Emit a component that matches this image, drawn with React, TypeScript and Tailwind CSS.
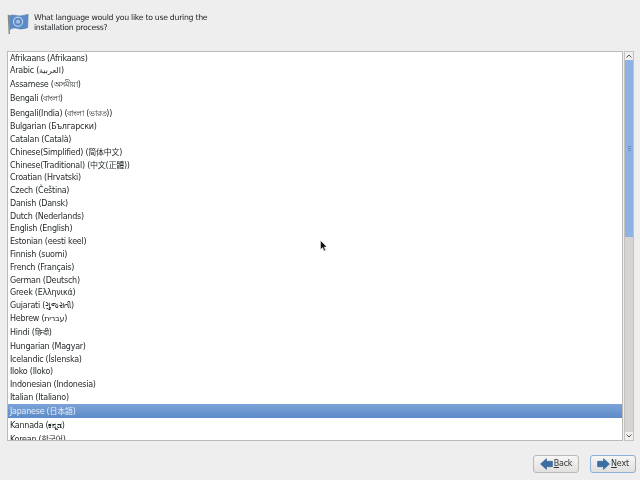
const languages: [string, string][] = [
  ['Afrikaans (Afrikaans)', 'h-[12px]'],
  ['Arabic (العربية)', 'h-[13px]'],
  ['Assamese (অসমীয়া)', 'h-[14px]'],
  ['Bengali (বাংলা)', 'h-[15px]'],
  ['Bengali(India) (বাংলা (ভারত))', 'h-[14px]'],
  ['Bulgarian (Български)', 'h-[13px]'],
  ['Catalan (Català)', 'h-[13px]'],
  ['Chinese(Simplified) (简体中文)', 'h-[13px]'],
  ['Chinese(Traditional) (中文(正體))', 'h-[12px]'],
  ['Croatian (Hrvatski)', 'h-[13px]'],
  ['Czech (Čeština)', 'h-[13px]'],
  ['Danish (Dansk)', 'h-[13px]'],
  ['Dutch (Nederlands)', 'h-[12px]'],
  ['English (English)', 'h-[13px]'],
  ['Estonian (eesti keel)', 'h-[13px]'],
  ['Finnish (suomi)', 'h-[13px]'],
  ['French (Français)', 'h-[13px]'],
  ['German (Deutsch)', 'h-[12px]'],
  ['Greek (Ελληνικά)', 'h-[13px]'],
  ['Gujarati (ગુજરાતી)', 'h-[13px]'],
  ['Hebrew (עברית)', 'h-[13px]'],
  ['Hindi (हिन्दी)', 'h-[15px]'],
  ['Hungarian (Magyar)', 'h-[13px]'],
  ['Icelandic (Íslenska)', 'h-[12px]'],
  ['Iloko (Iloko)', 'h-[13px]'],
  ['Indonesian (Indonesia)', 'h-[13px]'],
  ['Italian (Italiano)', 'h-[13px]'],
  ['Japanese (日本語)', 'h-[14px]'],
  ['Kannada (ಕನ್ನಡ)', 'h-[14px]'],
  ['Korean (한국어)', 'h-[14px]'],
];

function FlagIcon() {
  return (
    <svg width="23" height="22" viewBox="0 0 24 24" className="mt-[1px] shrink-0">
      <path d="M1 2 L2 23" stroke="#8a8a84" strokeWidth="1.6" fill="none" />
      <path d="M2 3 C7 1 11 4 15 3 C18 2.5 20 2 22.5 1.5 L22 16 C18 17 15 18 11 17 C8 16 5 16.5 2.8 18 Z" fill="#5b8cc8" stroke="#4a74a8" strokeWidth="0.6" />
      <circle cx="11.5" cy="9.5" r="5" fill="none" stroke="#c6d6ea" strokeWidth="1.2" />
      <circle cx="11.5" cy="9.5" r="2.2" fill="#a9c2e0" />
    </svg>
  );
}

function ArrowIcon({ flip }: { flip?: boolean }) {
  return (
    <svg width="13" height="12" viewBox="0 0 12 11" className={flip ? 'rotate-180' : ''}>
      <path d="M0.5 3 H6 V0.5 L11.5 5.5 L6 10.5 V8 H0.5 Z" fill="#3a6ea5" stroke="#2f5d8f" strokeWidth="0.5" />
    </svg>
  );
}

function WizardButton({ label, accel, flip, focused }: { label: string; accel: string; flip?: boolean; focused?: boolean }) {
  return (
    <button className={`flex h-[18px] w-[46px] items-center justify-center gap-[1px] rounded-[3px] border bg-gradient-to-b from-[#f6f6f5] to-[#e2e0de] text-[8px] tracking-[-0.2px] text-[#2e3436] ${focused ? 'border-[#8fb0d8]' : 'border-[#bdb9b5]'}`}>
      <ArrowIcon flip={flip} />
      <span>
        <span className="underline">{accel}</span>
        {label}
      </span>
    </button>
  );
}

export default function App() {
  return (
    <div className="relative flex h-[480px] w-[640px] flex-col overflow-hidden bg-[#eeeeee] font-['DejaVu_Sans','Noto_Sans_CJK_SC',sans-serif] text-[8px] tracking-[-0.25px] text-[#1f2426] blur-[0.3px]">
      <header className="flex h-[51px] items-start gap-[4px] pl-[7px] pt-[12px]">
        <FlagIcon />
        <p className="pt-[1px] text-[7.8px] tracking-[-0.3px] leading-[10px]">
          What language would you like to use during the
          <br />
          installation process?
        </p>
      </header>

      <div className="ml-[7px] flex h-[390px] w-[627px] gap-[1px]">
        <ul className="h-full w-[616px] overflow-hidden border border-[#bcb9b6] bg-white">
          {languages.map(([name, height]) => (
            <li
              key={name}
              className={`flex shrink-0 items-center whitespace-nowrap pl-[2px] pt-[1px] ${height} ${
                name.startsWith('Japanese') ? 'bg-gradient-to-b from-[#7ba3d8] to-[#5d8bc8] text-[#e8eef6]' : ''
              }`}
            >
              {name}
            </li>
          ))}
        </ul>

        <div className="flex w-[10px] flex-col border border-[#c4c1be] bg-[#d6d4d2]">
          <div className="flex h-[8px] items-center justify-center bg-[#f0efee] text-[#555]">
            <svg width="6" height="4" viewBox="0 0 6 4"><path d="M0.5 3.5 L3 1 L5.5 3.5" fill="none" stroke="#555" strokeWidth="1" /></svg>
          </div>
          <div className="flex h-[177px] items-center justify-center bg-[#8eb2e2]">
            <div className="flex flex-col gap-[1px]">
              <div className="h-px w-[3px] bg-[#6a8fc4]" />
              <div className="h-px w-[3px] bg-[#6a8fc4]" />
              <div className="h-px w-[3px] bg-[#6a8fc4]" />
            </div>
          </div>
          <div className="flex-1" />
          <div className="flex h-[8px] items-center justify-center bg-[#f0efee]">
            <svg width="6" height="4" viewBox="0 0 6 4"><path d="M0.5 0.5 L3 3 L5.5 0.5" fill="none" stroke="#555" strokeWidth="1" /></svg>
          </div>
        </div>
      </div>

      <footer className="flex flex-1 items-start justify-end gap-[11px] pr-[4px] pt-[14px]">
        <WizardButton label="ack" accel="B" flip />
        <WizardButton label="ext" accel="N" focused />
      </footer>

      <svg width="8" height="12" viewBox="0 0 8 12" className="absolute left-[320px] top-[240px]">
        <path d="M0.5 0.5 V9.5 L2.6 7.6 L4 11 L5.6 10.3 L4.2 7.1 L7 7 Z" fill="#111" stroke="#eee" strokeWidth="0.6" />
      </svg>
    </div>
  );
}
